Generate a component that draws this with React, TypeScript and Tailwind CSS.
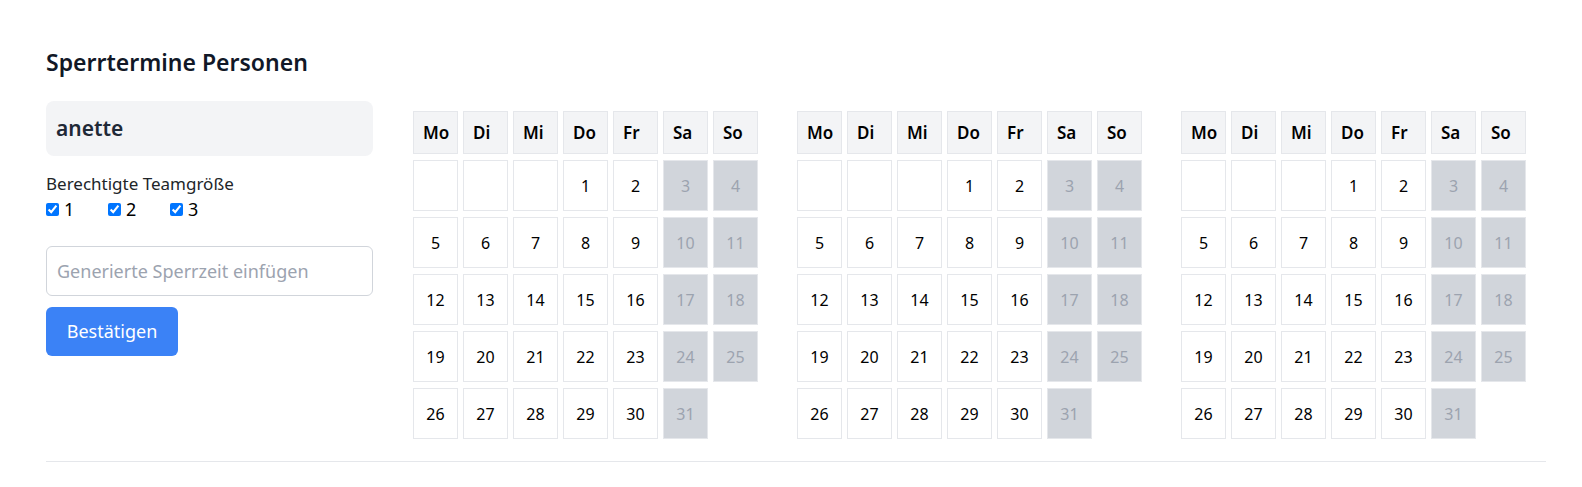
const WEEKDAYS = ["Mo", "Di", "Mi", "Do", "Fr", "Sa", "So"];

// first day falls on Thursday, 31 days
const days: (number | null)[] = [null, null, null, ...Array.from({ length: 31 }, (_, i) => i + 1)];

function Calendar() {
  return (
    <div className="grid grid-cols-[repeat(7,45px)] grid-rows-[43px_repeat(5,51px)] gap-x-[5px] gap-y-[6px]">
      {WEEKDAYS.map((d) => (
        <div
          key={d}
          className="flex items-center border border-[#e5e7eb] bg-[#f3f4f6] px-[9px] text-[17px] font-semibold text-black"
        >
          {d}
        </div>
      ))}
      {days.map((day, i) => {
        const weekend = i % 7 >= 5;
        return (
          <div
            key={i}
            className={
              weekend
                ? "flex items-center justify-center border border-[#e5e7eb] bg-[#d1d5db] text-[16px] text-[#9ca3af]"
                : "flex items-center justify-center border border-[#e5e7eb] bg-white text-[16px] text-black"
            }
          >
            {day}
          </div>
        );
      })}
    </div>
  );
}

export default function App() {
  return (
    <div className="min-h-screen bg-white pl-[46px] pr-[36px] pt-[48px] font-['Noto_Sans',sans-serif] text-[#212529]">
      <h2 className="text-[23px] font-semibold leading-7 text-[#111827]">Sperrtermine Personen</h2>

      <div className="mt-[25px] flex gap-[40px]">
        <div className="flex w-[327px] flex-col">
          <div className="flex h-[55px] items-center rounded-lg bg-[#f3f4f6] px-[10px] text-[21px] font-semibold text-[#1f2937]">
            anette
          </div>
          <div className="mt-[14px] text-[17px] leading-[27px]">Berechtigte Teamgröße</div>
          <div className="flex items-center text-[18px] leading-[24px]">
            {[1, 2, 3].map((n) => (
              <label key={n} className="flex w-[62px] items-center gap-[5px]">
                <input type="checkbox" defaultChecked className="m-0 h-[13px] w-[13px]" />
                <span className="text-black">{n}</span>
              </label>
            ))}
          </div>
          <input
            type="text"
            placeholder="Generierte Sperrzeit einfügen"
            className="mt-[25px] h-[50px] w-full rounded-md border border-[#d1d5db] px-[10px] text-[18px] outline-none placeholder:text-[#9ca3af]"
          />
          <button className="mt-[11px] h-[49px] w-[132px] rounded-md bg-[#3b82f6] text-[18px] text-white">
            Bestätigen
          </button>
        </div>

        <div className="mt-[10px] flex gap-[39px]">
          <Calendar />
          <Calendar />
          <Calendar />
        </div>
      </div>

      <div className="mt-[22px] h-px w-[1500px] bg-[#e5e7eb]" />
    </div>
  );
}
